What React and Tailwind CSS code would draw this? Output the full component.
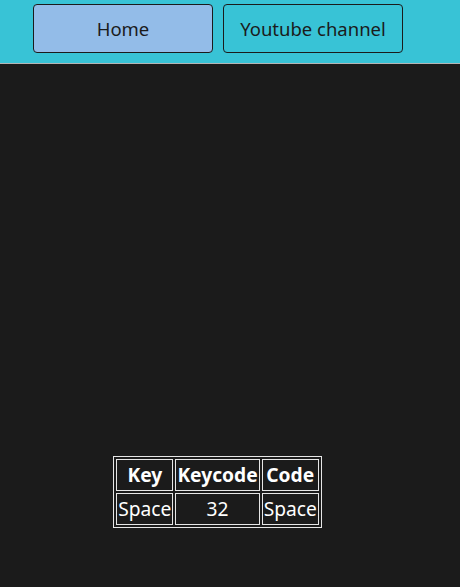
export default function App() {
  return (
    <div className="min-h-[587px] bg-[#1b1b1b] font-['Noto_Sans','Open_Sans',sans-serif]">
      <div className="h-[63px] bg-[#38c3d6] border-b border-[#b5b5b5] box-content">
        <div className="flex gap-[10px] pl-[33px] pt-[4px]">
          <button className="w-[180px] h-[49px] rounded-[4px] border border-[#1b1b1b] bg-[#93bce8] text-[18.5px] text-[#1b1b1b]">
            Home
          </button>
          <button className="w-[180px] h-[49px] rounded-[4px] border border-[#1b1b1b] bg-[#38c3d6] text-[18.5px] text-[#1b1b1b]">
            Youtube channel
          </button>
        </div>
      </div>
      <div className="w-[435px] flex justify-center pt-[392px]">
        <table className="border border-[#e6e6e6] border-separate border-spacing-[2px] text-white text-[19.2px] leading-[30px]">
          <thead>
            <tr>
              <th className="border border-[#e6e6e6] px-[1px] font-bold">Key</th>
              <th className="border border-[#e6e6e6] px-[1px] font-bold">Keycode</th>
              <th className="border border-[#e6e6e6] px-[1px] font-bold">Code</th>
            </tr>
          </thead>
          <tbody>
            <tr>
              <td className="border border-[#e6e6e6] px-[1px] text-center">Space</td>
              <td className="border border-[#e6e6e6] px-[1px] text-center">32</td>
              <td className="border border-[#e6e6e6] px-[1px] text-center">Space</td>
            </tr>
          </tbody>
        </table>
      </div>
    </div>
  );
}
